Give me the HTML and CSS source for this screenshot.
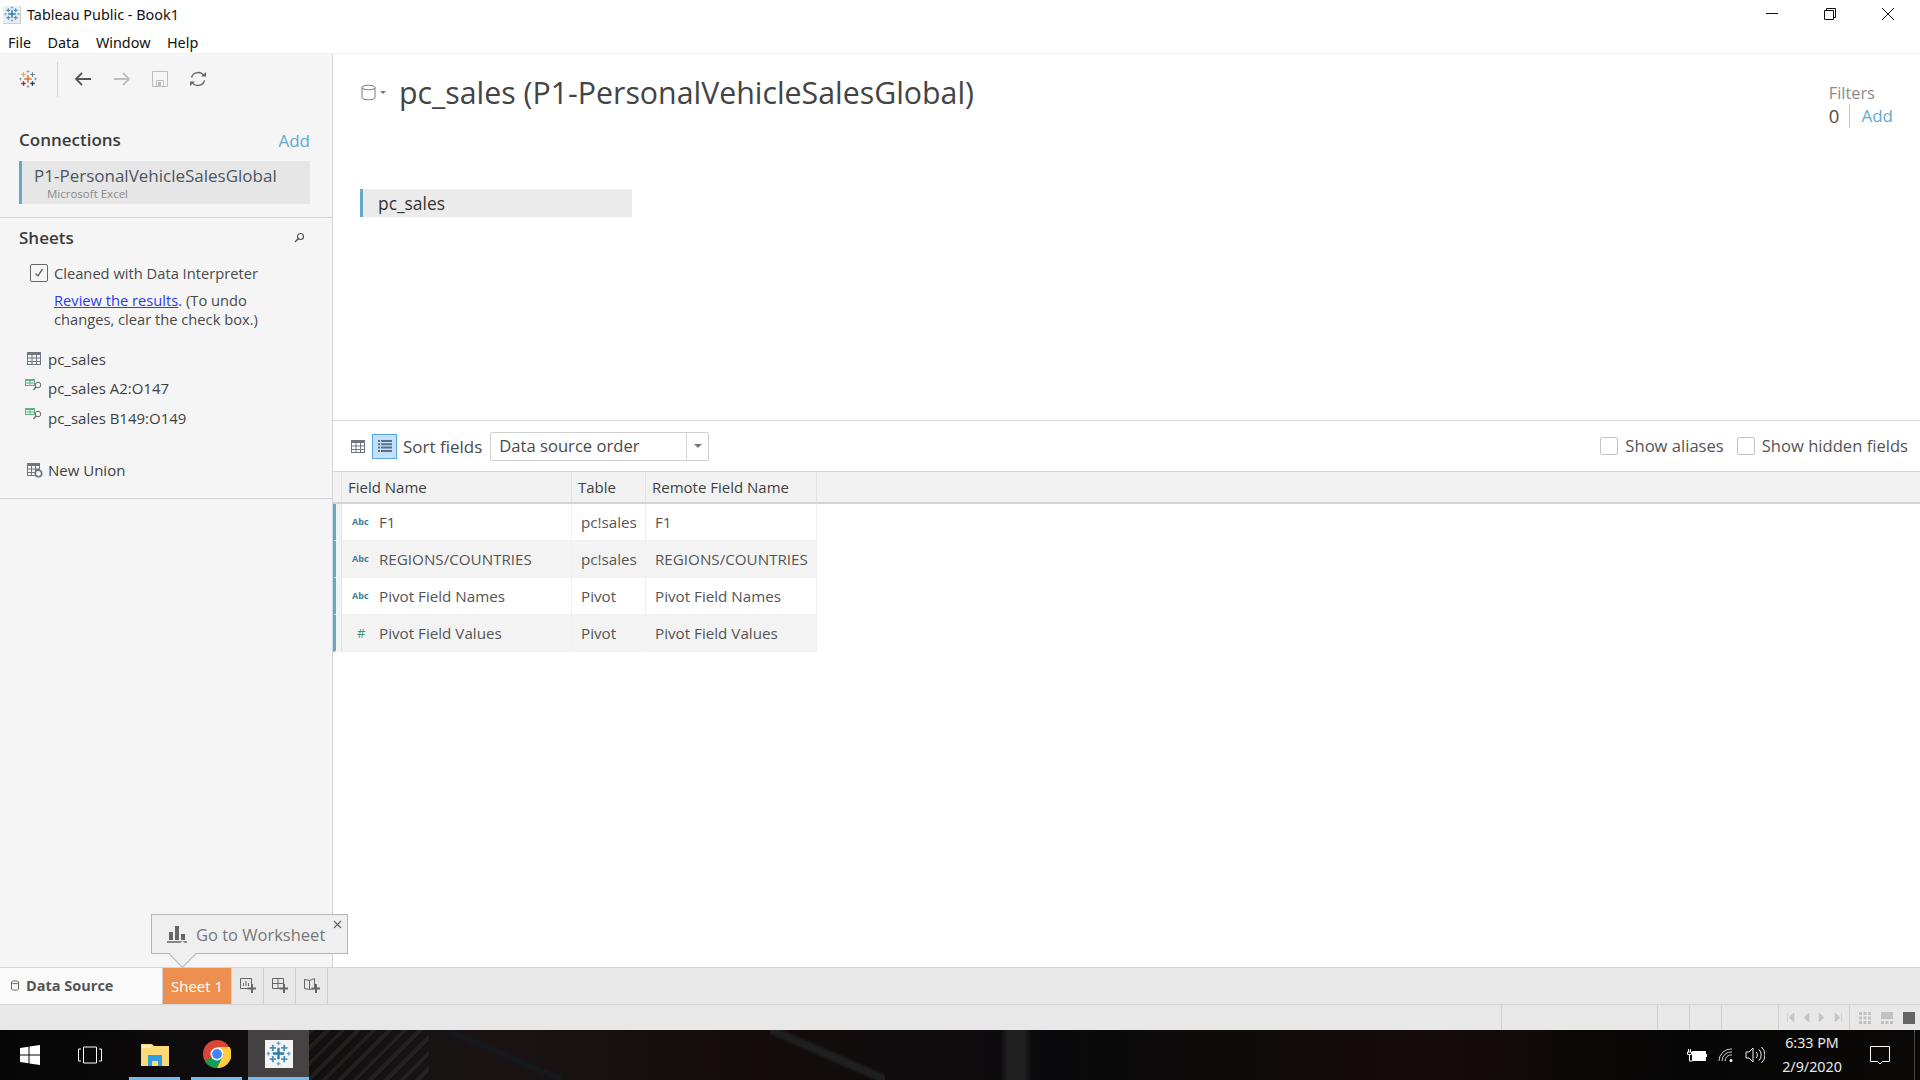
FILE: index.html
```html
<!DOCTYPE html>
<html lang="en">
<head>
    <meta charset="UTF-8">
    <title>Tableau Public - Book1</title>
    <link rel="stylesheet" href="styles.css">
</head>
<body>
    <svg class="defs" width="0" height="0">
        <symbol id="flake" viewBox="0 0 24 24">
            <path d="M12 6.500v11M6.500 12h11" stroke="#2f78a8" stroke-width="2.200" fill="none"/>
            <path d="M6.500 3.500v6M3.500 6.500h6M17.500 3.500v6M14.500 6.500h6M6.500 14.500v6M3.500 17.500h6M17.500 14.500v6M14.500 17.500h6" stroke="#4a8fbc" stroke-width="1.700" fill="none"/>
            <path d="M12 .500v3.500M10.200 2.200h3.600M12 20v3.500M10.200 21.800h3.600M2.200 10.200v3.600M.500 12H4M21.800 10.200v3.600M20 12h3.500" stroke="#6fa5c8" stroke-width="1.300" fill="none"/>
        </symbol>
    </svg>

    <header class="title-bar">
        <span class="app-icon"><svg width="16" height="16"><use href="#flake"/></svg></span>
        <span class="app-title">Tableau Public - Book1</span>
        <div class="window-btns">
            <svg width="14" height="14" viewBox="0 0 14 14"><path d="M1 6.500h12" stroke="#111" fill="none"/></svg>
            <svg width="14" height="14" viewBox="0 0 14 14"><path d="M1.500 3.500h9v9h-9zM3.500 3.500v-2h9v9h-2" stroke="#111" fill="none"/></svg>
            <svg width="14" height="14" viewBox="0 0 14 14"><path d="M1 1l12 12M13 1L1 13" stroke="#111" fill="none"/></svg>
        </div>
    </header>
    <nav class="menu-bar">
        <span>File</span><span>Data</span><span>Window</span><span>Help</span>
    </nav>

    <div class="workspace">
        <aside class="sidebar">
            <div class="side-tools">
                <svg class="logo" width="18" height="18" viewBox="0 0 24 24">
                    <path d="M12 7v10M7 12h10" stroke="#e8762c" stroke-width="2.200"/>
                    <path d="M6 3v6M3 6h6" stroke="#f0a04b" stroke-width="1.600"/>
                    <path d="M18 3v6M15 6h6" stroke="#5b879b" stroke-width="1.600"/>
                    <path d="M6 15v6M3 18h6" stroke="#c72037" stroke-width="1.800"/>
                    <path d="M18 15v6M15 18h6" stroke="#1f447a" stroke-width="1.800"/>
                    <path d="M12 0v4M10 2h4M12 20v4M10 22h4M2 10v4M0 12h4M22 10v4M20 12h4" stroke="#7199a6" stroke-width="1"/>
                </svg>
                <span class="tool-sep"></span>
                <svg width="18" height="16" viewBox="0 0 18 16"><path d="M17 8H2M8 2L2 8l6 6" stroke="#555" stroke-width="1.800" fill="none"/></svg>
                <svg width="18" height="16" viewBox="0 0 18 16"><path d="M1 8h15M10 2l6 6-6 6" stroke="#bdbdbd" stroke-width="1.800" fill="none"/></svg>
                <svg width="16" height="16" viewBox="0 0 16 16"><path d="M.5.500h15v15H.500zM4.500 15.500v-6h7v6" stroke="#bdbdbd" fill="none"/><path d="M6 11h3v4H6z" fill="#bdbdbd"/></svg>
                <svg width="18" height="18" viewBox="0 0 18 18"><path d="M2.500 7.500A6.800 6.800 0 0 1 15 6M15.500 10.500A6.800 6.800 0 0 1 3 12" stroke="#666" stroke-width="1.300" fill="none"/><path d="M12 6.500h5V2zM6 11.500H1V16z" fill="#666"/></svg>
            </div>

            <section class="connections">
                <div class="side-head">
                    <h2>Connections</h2>
                    <a class="add-link">Add</a>
                </div>
                <div class="conn-item">
                    <div class="conn-name">P1-PersonalVehicleSalesGlobal</div>
                    <div class="conn-type">Microsoft Excel</div>
                </div>
            </section>

            <section class="sheets">
                <div class="side-head">
                    <h2>Sheets</h2>
                    <svg width="12" height="12" viewBox="0 0 12 12"><circle cx="7.500" cy="4.500" r="3" stroke="#555" stroke-width="1.200" fill="none"/><path d="M5.500 6.500L2 10" stroke="#555" stroke-width="1.500"/></svg>
                </div>
                <label class="interp">
                    <span class="check is-on">
                        <svg width="10" height="10" viewBox="0 0 10 10"><path d="M1.500 5.500l2.500 2.500 4.500-7" stroke="#666" stroke-width="1.400" fill="none"/></svg>
                    </span>
                    <span class="interp-text">Cleaned with Data Interpreter</span>
                </label>
                <p class="interp-note"><a>Review the results</a>. (To undo changes, clear the check box.)</p>

                <div class="sheet-row first-row">
                    <svg width="14" height="13" viewBox="0 0 14 13"><path d="M0 0h14v13H0z" fill="#6f7680"/><path d="M1 3h3.500v2.500H1zM5.500 3H9v2.500H5.500zM10 3h3v2.500h-3zM1 6.500h3.500V9H1zM5.500 6.500H9V9H5.500zM10 6.500h3V9h-3zM1 10h3.500v2H1zM5.500 10H9v2H5.500zM10 10h3v2h-3z" fill="#f5f5f5"/></svg>
                    <span>pc_sales</span>
                </div>
                <div class="sheet-row">
                    <svg class="wide" width="17" height="13" viewBox="0 0 17 13"><path d="M0 0h10v7H0z" fill="#5fb087"/><path d="M1 2h3.500v1.500H1zM5.500 2H9v1.500H5.500zM1 4.500h3.500V6H1zM5.500 4.500H9V6H5.500z" fill="#f5f5f5"/><circle cx="13" cy="6" r="2.800" stroke="#666" fill="none"/><path d="M11 8l-2.500 3" stroke="#666" stroke-width="1.200"/></svg>
                    <span>pc_sales A2:O147</span>
                </div>
                <div class="sheet-row">
                    <svg class="wide" width="17" height="13" viewBox="0 0 17 13"><path d="M0 0h10v7H0z" fill="#5fb087"/><path d="M1 2h3.500v1.500H1zM5.500 2H9v1.500H5.500zM1 4.500h3.500V6H1zM5.500 4.500H9V6H5.500z" fill="#f5f5f5"/><circle cx="13" cy="6" r="2.800" stroke="#666" fill="none"/><path d="M11 8l-2.500 3" stroke="#666" stroke-width="1.200"/></svg>
                    <span>pc_sales B149:O149</span>
                </div>
                <div class="sheet-row new-union">
                    <svg width="16" height="15" viewBox="0 0 16 15"><path d="M0 0h13v13H0z" fill="#6f7680"/><path d="M1 3h3v2.500H1zM5 3h3v2.500H5zM9 3h3v2.500H9zM1 6.500h3V9H1zM5 6.500h3V9H5zM1 10h3v2H1zM5 10h3v2H5z" fill="#f5f5f5"/><circle cx="11.500" cy="10.500" r="3.200" fill="#f5f5f5" stroke="#6f7680" stroke-width="1.600"/></svg>
                    <span>New Union</span>
                </div>
            </section>
        </aside>

        <main class="content">
            <div class="canvas">
                <div class="source-head">
                    <div class="source-icon">
                        <svg width="15" height="17" viewBox="0 0 15 17"><path d="M1 3.500C1 .500 14 .500 14 3.500v10c0 3-13 3-13 0zM1 3.500c0 3 13 3 13 0" stroke="#777" fill="none"/></svg>
                        <span class="mini-caret"></span>
                    </div>
                    <h1>pc_sales (P1-PersonalVehicleSalesGlobal)</h1>
                    <div class="filters">
                        <div class="filters-label">Filters</div>
                        <div class="filters-row"><span class="filters-count">0</span><a class="add-link">Add</a></div>
                    </div>
                </div>
                <div class="table-chip">pc_sales</div>
            </div>

            <div class="field-tools">
                <svg class="grid-icon" width="14" height="13" viewBox="0 0 14 13"><path d="M0 0h14v13H0z" fill="#6f7680"/><path d="M1 3h3.500v2.500H1zM5.500 3H9v2.500H5.500zM10 3h3v2.500h-3zM1 6.500h3.500V9H1zM5.500 6.500H9V9H5.500zM10 6.500h3V9h-3zM1 10h3.500v2H1zM5.500 10H9v2H5.500zM10 10h3v2h-3z" fill="#fff"/></svg>
                <span class="list-btn">
                    <svg width="14" height="12" viewBox="0 0 14 12"><path d="M0 0h2v2H0zM3 0h11v2H3zM0 3.300h2v2H0zM3 3.300h11v2H3zM0 6.600h2v2H0zM3 6.600h11v2H3zM0 9.900h2v2H0zM3 9.900h11v2H3z" fill="#56708a"/></svg>
                </span>
                <span class="sort-label">Sort fields</span>
                <div class="select">
                    <span class="select-value">Data source order</span>
                    <span class="select-arrow"><span class="mini-caret"></span></span>
                </div>
                <label class="opt opt-first"><span class="check"></span><span>Show aliases</span></label>
                <label class="opt"><span class="check"></span><span>Show hidden fields</span></label>
            </div>

            <div class="field-grid">
                <div class="grid-row grid-head">
                    <div class="cell stub"></div>
                    <div class="cell name">Field Name</div>
                    <div class="cell tbl">Table</div>
                    <div class="cell remote">Remote Field Name</div>
                </div>
                <div class="grid-row">
                    <div class="cell stub"></div>
                    <div class="cell name"><span class="type-abc">Abc</span>F1</div>
                    <div class="cell tbl">pc!sales</div>
                    <div class="cell remote">F1</div>
                </div>
                <div class="grid-row is-alt">
                    <div class="cell stub"></div>
                    <div class="cell name"><span class="type-abc">Abc</span>REGIONS/COUNTRIES</div>
                    <div class="cell tbl">pc!sales</div>
                    <div class="cell remote">REGIONS/COUNTRIES</div>
                </div>
                <div class="grid-row">
                    <div class="cell stub"></div>
                    <div class="cell name"><span class="type-abc">Abc</span>Pivot Field Names</div>
                    <div class="cell tbl">Pivot</div>
                    <div class="cell remote">Pivot Field Names</div>
                </div>
                <div class="grid-row is-alt">
                    <div class="cell stub"></div>
                    <div class="cell name"><span class="type-abc type-num">#</span>Pivot Field Values</div>
                    <div class="cell tbl">Pivot</div>
                    <div class="cell remote">Pivot Field Values</div>
                </div>
            </div>
        </main>

        <div class="goto-tip">
            <svg width="20" height="18" viewBox="0 0 20 18"><path d="M2 7h4v8H2zM8 1h4v14H8zM14 9h4v6h-4z" fill="#666"/><path d="M0 17h20" stroke="#666" stroke-width="1.500"/></svg>
            <span>Go to Worksheet</span>
            <svg class="tip-close" width="9" height="9" viewBox="0 0 9 9"><path d="M1 1l7 7M8 1L1 8" stroke="#666" stroke-width="1.200"/></svg>
        </div>
    </div>

    <div class="tab-bar">
        <div class="tab tab-source">
            <svg width="8" height="11" viewBox="0 0 8 11"><path d="M.5 2C.5.500 7.500.500 7.500 2v7c0 1.500-7 1.500-7 0zM.5 2.500c0 1.500 7 1.500 7 0" stroke="#666" fill="none"/></svg>
            <span>Data Source</span>
        </div>
        <div class="tab tab-sheet">Sheet 1</div>
        <div class="tab tab-add">
            <svg width="16" height="16" viewBox="0 0 16 16"><path d="M.5.500h11v10H.500zM3.500 8V5M6 8V3M8.500 8V5" stroke="#666" fill="none"/><path d="M12 6v9M7.500 10.500h9" stroke="#666" stroke-width="2"/></svg>
        </div>
        <div class="tab tab-add">
            <svg width="16" height="16" viewBox="0 0 16 16"><path d="M.5.500h11v10H.500zM6 .500v10M.5 5.500h11" stroke="#666" fill="none"/><path d="M12 6v9M7.500 10.500h9" stroke="#666" stroke-width="2"/></svg>
        </div>
        <div class="tab tab-add">
            <svg width="16" height="16" viewBox="0 0 16 16"><path d="M.5 1.500l5 1 5-2v10l-5 1-5-1zM5.500 2.500v9" stroke="#666" fill="none"/><path d="M12 6v9M7.500 10.500h9" stroke="#666" stroke-width="2"/></svg>
        </div>
    </div>

    <footer class="status-bar">
        <span class="status-cell s1"></span>
        <span class="status-cell s2"></span>
        <span class="status-cell s3"></span>
        <span class="status-cell s3"></span>
        <span class="status-cell s4"></span>
        <span class="status-cell s5">
            <svg width="55" height="9" viewBox="0 0 55 9"><path d="M.5 0v9M7 0v9L2 4.500zM22 0v9l-5-4.500zM32 0v9l5-4.500zM48 0v9l5-4.500zM54.500 0v9" fill="#c4c4c4" stroke="#c4c4c4" stroke-width=".6"/></svg>
        </span>
        <span class="status-cell s6">
            <svg width="12" height="12" viewBox="0 0 12 12"><path d="M0 0h3v3H0zM4.500 0h3v3h-3zM9 0h3v3H9zM0 4.500h3v3H0zM4.500 4.500h3v3h-3zM9 4.500h3v3H9zM0 9h3v3H0zM4.500 9h3v3h-3zM9 9h3v3H9z" fill="#c0c0c0"/></svg>
            <svg width="12" height="12" viewBox="0 0 12 12"><path d="M0 0h12v7H0zM0 9h3v3H0zM4.500 9h3v3h-3zM9 9h3v3H9z" fill="#c0c0c0"/></svg>
            <svg width="12" height="12" viewBox="0 0 12 12"><path d="M0 0h12v12H0z" fill="#666"/></svg>
        </span>
    </footer>

    <div class="taskbar">
        <div class="task-btn">
            <svg width="20" height="20" viewBox="0 0 20 20"><path d="M0 3l8.500-1.200v7.700H0zM9.500 1.600L20 0v9.500H9.500zM0 10.500h8.500v7.700L0 17zM9.500 10.500H20V20L9.500 18.400z" fill="#fff"/></svg>
        </div>
        <div class="task-btn">
            <svg width="24" height="18" viewBox="0 0 24 18"><path d="M5.500 1h13v16h-13zM3 3H.500v12H3M21 3h2.500v12H21" stroke="#fff" fill="none"/></svg>
        </div>
        <div class="task-btn is-open">
            <svg width="28" height="24" viewBox="0 0 28 24"><path d="M0 2h11l2 2h15v20H0z" fill="#fbd974"/><path d="M1 3.500h9v2H1z" fill="#fff3c4"/><path d="M7 13h14v11h-4v-5h-6v5H7z" fill="#2f9fe0"/></svg>
        </div>
        <div class="task-btn is-open">
            <svg width="28" height="28" viewBox="0 0 28 28">
                <circle cx="14" cy="14" r="14" fill="#db4437"/>
                <path d="M14 14L2 21a14 14 0 0 0 12 7l7-14z" fill="#0f9d58"/>
                <path d="M14 7h12.700A14 14 0 0 1 14 28l7-14z" fill="#ffcd40"/>
                <circle cx="14" cy="14" r="6.500" fill="#fff"/>
                <circle cx="14" cy="14" r="5" fill="#4285f4"/>
            </svg>
        </div>
        <div class="task-btn is-open is-active">
            <span class="tile"><svg width="25" height="25"><use href="#flake"/></svg></span>
        </div>
        <div class="tray">
            <svg width="20" height="13" viewBox="0 0 20 13"><path d="M5.500 2.500h13v9h-13z" fill="#fff" stroke="#fff"/><path d="M19 5h1v3h-1z" fill="#fff"/><path d="M1.500 0v3M3.500 0v3M.5 3h4v2.500h-4zM2.500 5.500V12h3" stroke="#fff" fill="none"/></svg>
            <svg width="16" height="14" viewBox="0 0 16 14"><path d="M1 13A12 12 0 0 1 14 1M4 13A9 9 0 0 1 14 4M7 13a6 6 0 0 1 7-6" stroke="#ccc" fill="none"/><circle cx="13" cy="12.500" r="1.500" fill="#fff"/></svg>
            <svg width="20" height="18" viewBox="0 0 20 18"><path d="M1 6h3l4-4v14l-4-4H1zM11 6a4 4 0 0 1 0 6M14 3.500a8 8 0 0 1 0 11M16.500 1a11 11 0 0 1 0 16" stroke="#eee" fill="none"/></svg>
            <div class="clock"><div>6:33 PM</div><div>2/9/2020</div></div>
            <svg class="notif" width="20" height="20" viewBox="0 0 20 20"><path d="M.5 1.500h19v15h-7L10 19l-2.500-2.500h-7z" stroke="#fff" fill="none"/></svg>
            <span class="show-desktop"></span>
        </div>
    </div>
</body>
</html>
```

FILE: styles.css
```css
* {
    margin: 0;
    padding: 0;
    box-sizing: border-box;
}

body {
    width: 1920px;
    height: 1080px;
    overflow: hidden;
    display: flex;
    flex-direction: column;
    background: #fff;
    color: #4a4a4a;
    font-family: 'Open Sans', 'Liberation Sans', sans-serif;
    font-size: 15px;
}

.defs {
    position: absolute;
}

svg {
    display: block;
    flex-shrink: 0;
}

/* window chrome */
.title-bar {
    height: 27px;
    display: flex;
    align-items: center;
    padding: 2px 0 0 3px;
    color: #111;
    font-family: 'Noto Sans', sans-serif;
    font-size: 14.400px;
}

.app-icon {
    width: 18px;
    height: 18px;
    display: flex;
    align-items: center;
    justify-content: center;
    margin-right: 6px;
    background: #e9eef2;
    border-right: 1px solid #ccc;
    border-bottom: 1px solid #ccc;
}

.window-btns {
    margin-left: auto;
    display: flex;
    gap: 44px;
    padding: 0 25px 2px 0;
}

.menu-bar {
    height: 27px;
    display: flex;
    align-items: center;
    gap: 16.500px;
    padding: 4px 0 0 8px;
    color: #111;
    font-family: 'Noto Sans', sans-serif;
    font-size: 14.400px;
    border-bottom: 1px solid #f0f0f0;
}

.workspace {
    position: relative;
    height: 913px;
    display: flex;
}

/* left pane */
.sidebar {
    width: 333px;
    background: #f5f5f5;
    border-right: 1px solid #d4d4d4;
}

.side-tools {
    height: 50px;
    display: flex;
    align-items: center;
    gap: 21px;
    padding-left: 19px;
}

.tool-sep {
    width: 1px;
    height: 35px;
    margin: 0 -5px 0 -1px;
    background: #d4d4d4;
}

.connections {
    height: 114px;
    padding: 24px 22px 0 19px;
    border-bottom: 1px solid #d4d4d4;
}

.side-head {
    display: flex;
    justify-content: space-between;
    align-items: center;
    height: 24px;
}

.side-head h2 {
    padding-bottom: 2px;
    font-size: 17px;
    font-weight: 600;
    color: #3c3c3c;
}

.add-link {
    color: #5fa9cf;
    font-size: 17px;
}

.conn-item {
    height: 43px;
    margin-top: 9px;
    padding: 4px 0 0 12px;
    background: #e6e6e6;
    border-left: 3px solid #65a9c9;
}

.conn-name {
    font-size: 17px;
    line-height: 22px;
    color: #4b5563;
}

.conn-type {
    padding-left: 13px;
    font-size: 11.500px;
    line-height: 14px;
    color: #8a8a8a;
}

.sheets {
    height: 281px;
    padding: 8px 22px 0 19px;
    border-bottom: 1px solid #d4d4d4;
}

.sheets .side-head {
    padding-right: 5px;
}

.interp {
    height: 18px;
    display: flex;
    align-items: center;
    gap: 6px;
    margin: 14px 0 0 11px;
    font-size: 14.700px;
}

.interp-text {
    line-height: 18px;
}

.check {
    width: 18px;
    height: 18px;
    display: flex;
    align-items: center;
    justify-content: center;
    background: #fff;
    border: 1px solid #c4c4c4;
    border-radius: 2px;
}

.check.is-on {
    background: #f5f5f5;
    border-color: #666;
}

.interp-note {
    width: 220px;
    margin: 9px 0 0 35px;
    font-size: 14.700px;
    line-height: 19px;
}

.interp-note a {
    color: #2a3cf0;
    text-decoration: underline;
}

.sheet-row {
    height: 29.500px;
    display: flex;
    align-items: center;
    gap: 7px;
    padding-left: 8px;
    font-size: 15px;
    color: #3f3f3f;
}

.first-row {
    margin-top: 15px;
}

.sheet-row .wide {
    margin: -6px -1px 0 -2px;
}

.new-union {
    margin-top: 23px;
    gap: 5px;
}

/* right pane */
.content {
    flex: 1;
    display: flex;
    flex-direction: column;
}

.canvas {
    height: 367px;
    padding: 0 27px 0 27px;
    border-bottom: 1px solid #d9d9d9;
}

.source-head {
    display: flex;
    align-items: flex-start;
    height: 135px;
}

.source-icon {
    display: flex;
    align-items: center;
    gap: 4px;
    margin: 30px 0 0 1px;
}

.mini-caret {
    width: 0;
    height: 0;
    border-left: 3px solid transparent;
    border-right: 3px solid transparent;
    border-top: 3px solid #777;
}

.source-head h1 {
    margin: 14px 0 0 13px;
    font-size: 30.300px;
    line-height: 50px;
    font-weight: 400;
    color: #444;
}

.filters {
    margin: 28px 0 0 auto;
    font-size: 16.300px;
}

.filters-label {
    color: #8a8a8a;
    line-height: 22px;
}

.filters-row {
    display: flex;
    align-items: center;
    line-height: 24px;
}

.filters-count {
    padding-right: 10px;
    margin-right: 11px;
    border-right: 1px solid #c8c8c8;
    font-size: 18.500px;
}

.table-chip {
    width: 272px;
    height: 28px;
    padding-left: 15px;
    background: #ebebeb;
    border-left: 3px solid #65a9c9;
    font-size: 17.400px;
    line-height: 28px;
    color: #333;
}

.field-tools {
    height: 50px;
    display: flex;
    align-items: center;
    padding: 0 12px 0 18px;
    font-size: 17px;
}

.grid-icon {
    margin-right: 7px;
}

.list-btn {
    width: 25px;
    height: 25px;
    display: flex;
    align-items: center;
    justify-content: center;
    background: #c5e0fb;
    border: 1px solid #5aa5e6;
}

.sort-label {
    margin: 0 8px 0 6px;
}

.select {
    width: 219px;
    height: 29px;
    display: flex;
    align-items: center;
    border: 1px solid #cfcfcf;
    border-radius: 2px;
    font-size: 16.600px;
}

.select-value {
    flex: 1;
    padding: 0 0 2px 8px;
}

.select-arrow {
    width: 22px;
    height: 27px;
    display: flex;
    align-items: center;
    justify-content: center;
    border-left: 1px solid #d9d9d9;
}

.select-arrow .mini-caret {
    border-left-width: 4px;
    border-right-width: 4px;
    border-top-width: 4px;
}

.opt {
    display: flex;
    align-items: center;
    gap: 7px;
    margin-left: 13px;
    font-size: 16.600px;
    color: #555;
}

.opt span:last-child {
    padding-bottom: 2px;
}

.opt-first {
    margin-left: auto;
}

.field-grid {
    border-top: 1px solid #d4d4d4;
    font-size: 15.200px;
}

.grid-row {
    height: 37px;
    display: flex;
    color: #555;
}

.cell {
    display: flex;
    align-items: center;
    border-right: 1px solid #f0f0f0;
    border-bottom: 1px solid #f0f0f0;
    white-space: nowrap;
}

.stub {
    width: 9px;
    background: #f2f2f2;
    border-left: 3px solid #65a9c9;
    border-right: 1px solid #e4e4e4;
}

.name {
    width: 230px;
    padding-left: 10px;
}

.tbl {
    width: 74px;
    padding-left: 9px;
}

.remote {
    width: 171px;
    padding-left: 9px;
}

.is-alt .cell {
    background: #f3f3f3;
}

.grid-head {
    height: 32px;
    background: #f2f2f2;
    border-bottom: 2px solid #d4d4d4;
    color: #3f3f3f;
    font-size: 15px;
}

.grid-head .cell {
    border-bottom: 0;
    border-right-color: #e4e4e4;
}

.grid-head .stub {
    border-left: 0;
}

.grid-head .name {
    padding-left: 6px;
}

.grid-head .tbl {
    padding-left: 6px;
}

.grid-head .remote {
    padding-left: 6px;
}

.type-abc {
    width: 27px;
    padding-bottom: 1px;
    font-size: 9px;
    font-weight: 700;
    color: #3f7f9a;
}

.type-num {
    padding-left: 5px;
    font-size: 13px;
    font-weight: 400;
    color: #3f9a78;
}

.goto-tip {
    position: absolute;
    left: 151px;
    top: 860px;
    width: 197px;
    height: 40px;
    display: flex;
    align-items: center;
    gap: 9px;
    padding-left: 15px;
    background: #efefef;
    border: 1px solid #b5b5b5;
    font-size: 16.500px;
    color: #777;
}

.goto-tip::after {
    content: "";
    position: absolute;
    left: 21px;
    top: 30px;
    width: 18px;
    height: 18px;
    background: #efefef;
    border-right: 1px solid #b5b5b5;
    border-bottom: 1px solid #b5b5b5;
    transform: rotate(45deg);
}

.tip-close {
    position: absolute;
    right: 5px;
    top: 5px;
}

/* bottom bars */
.tab-bar {
    height: 38px;
    display: flex;
    background: #e8e8e8;
    border-top: 1px solid #d4d4d4;
    border-bottom: 1px solid #d4d4d4;
}

.tab {
    display: flex;
    align-items: center;
    justify-content: center;
    border-right: 1px solid #d0d0d0;
}

.tab-source {
    width: 163px;
    justify-content: flex-start;
    gap: 7px;
    padding: 0 0 1px 11px;
    background: #fafafa;
    font-size: 14.500px;
    font-weight: 700;
    color: #555;
}

.tab-sheet {
    width: 69px;
    background: #ec8f4f;
    color: #fff;
    font-size: 15px;
}

.tab-add {
    width: 32px;
}

.status-bar {
    height: 25px;
    display: flex;
    background: #e8e8e8;
}

.status-cell {
    display: flex;
    align-items: center;
    justify-content: center;
    border-right: 1px solid #d0d0d0;
}

.s1 { width: 1502px; }
.s2 { width: 156px; }
.s3 { width: 32px; }
.s4 { width: 57px; }
.s5 { width: 71px; }

.s6 {
    flex: 1;
    gap: 10px;
    padding-left: 3px;
    border-right: 0;
}

.taskbar {
    height: 50px;
    display: flex;
    background:
        repeating-linear-gradient(135deg, rgba(255, 255, 255, .06) 0 4px, transparent 4px 11px) 309px 0 / 120px 50px no-repeat,
        linear-gradient(to top right, transparent 46%, #15181d 49%, #15181d 52%, transparent 55%) 446px 0 / 115px 50px no-repeat,
        linear-gradient(to top right, transparent 44%, #1f1f1f 48%, #1f1f1f 53%, transparent 57%) 770px 0 / 115px 50px no-repeat,
        linear-gradient(90deg, transparent 1000px, #202020 1008px, #202020 1024px, transparent 1032px),
        linear-gradient(90deg, #060606 0, #1a1415 25%, #140c0c 40%, #0a0a0c 55%, #0d0a0a 62%, #150c0a 75%, #060606 88%, #0b0908 100%);
}

.task-btn {
    width: 60px;
    display: flex;
    align-items: center;
    justify-content: center;
}

.task-btn:nth-child(3) {
    width: 51px;
    margin-left: 9px;
}

.task-btn:nth-child(4) {
    width: 51px;
    margin-left: 11px;
}

.task-btn:nth-child(5) {
    width: 61px;
    margin-left: 6px;
}

.is-open {
    border-bottom: 3px solid #76b9ed;
}

.is-active {
    background: rgba(255, 255, 255, .22);
}

.tile {
    width: 28px;
    height: 28px;
    display: flex;
    align-items: center;
    justify-content: center;
    background: #f3f3f3;
}

.tray {
    margin-left: auto;
    display: flex;
    align-items: center;
    color: #e8e8e8;
    gap: 11px;
}

.clock {
    width: 72px;
    margin: 0 11px 0 0;
    text-align: center;
    font-family: 'Noto Sans', sans-serif;
    font-size: 14.300px;
    line-height: 24px;
}

.notif {
    margin-right: 21px;
}

.show-desktop {
    width: 1px;
    height: 50px;
    margin-left: -8px;
    margin-right: 5px;
    background: #444;
}
```
